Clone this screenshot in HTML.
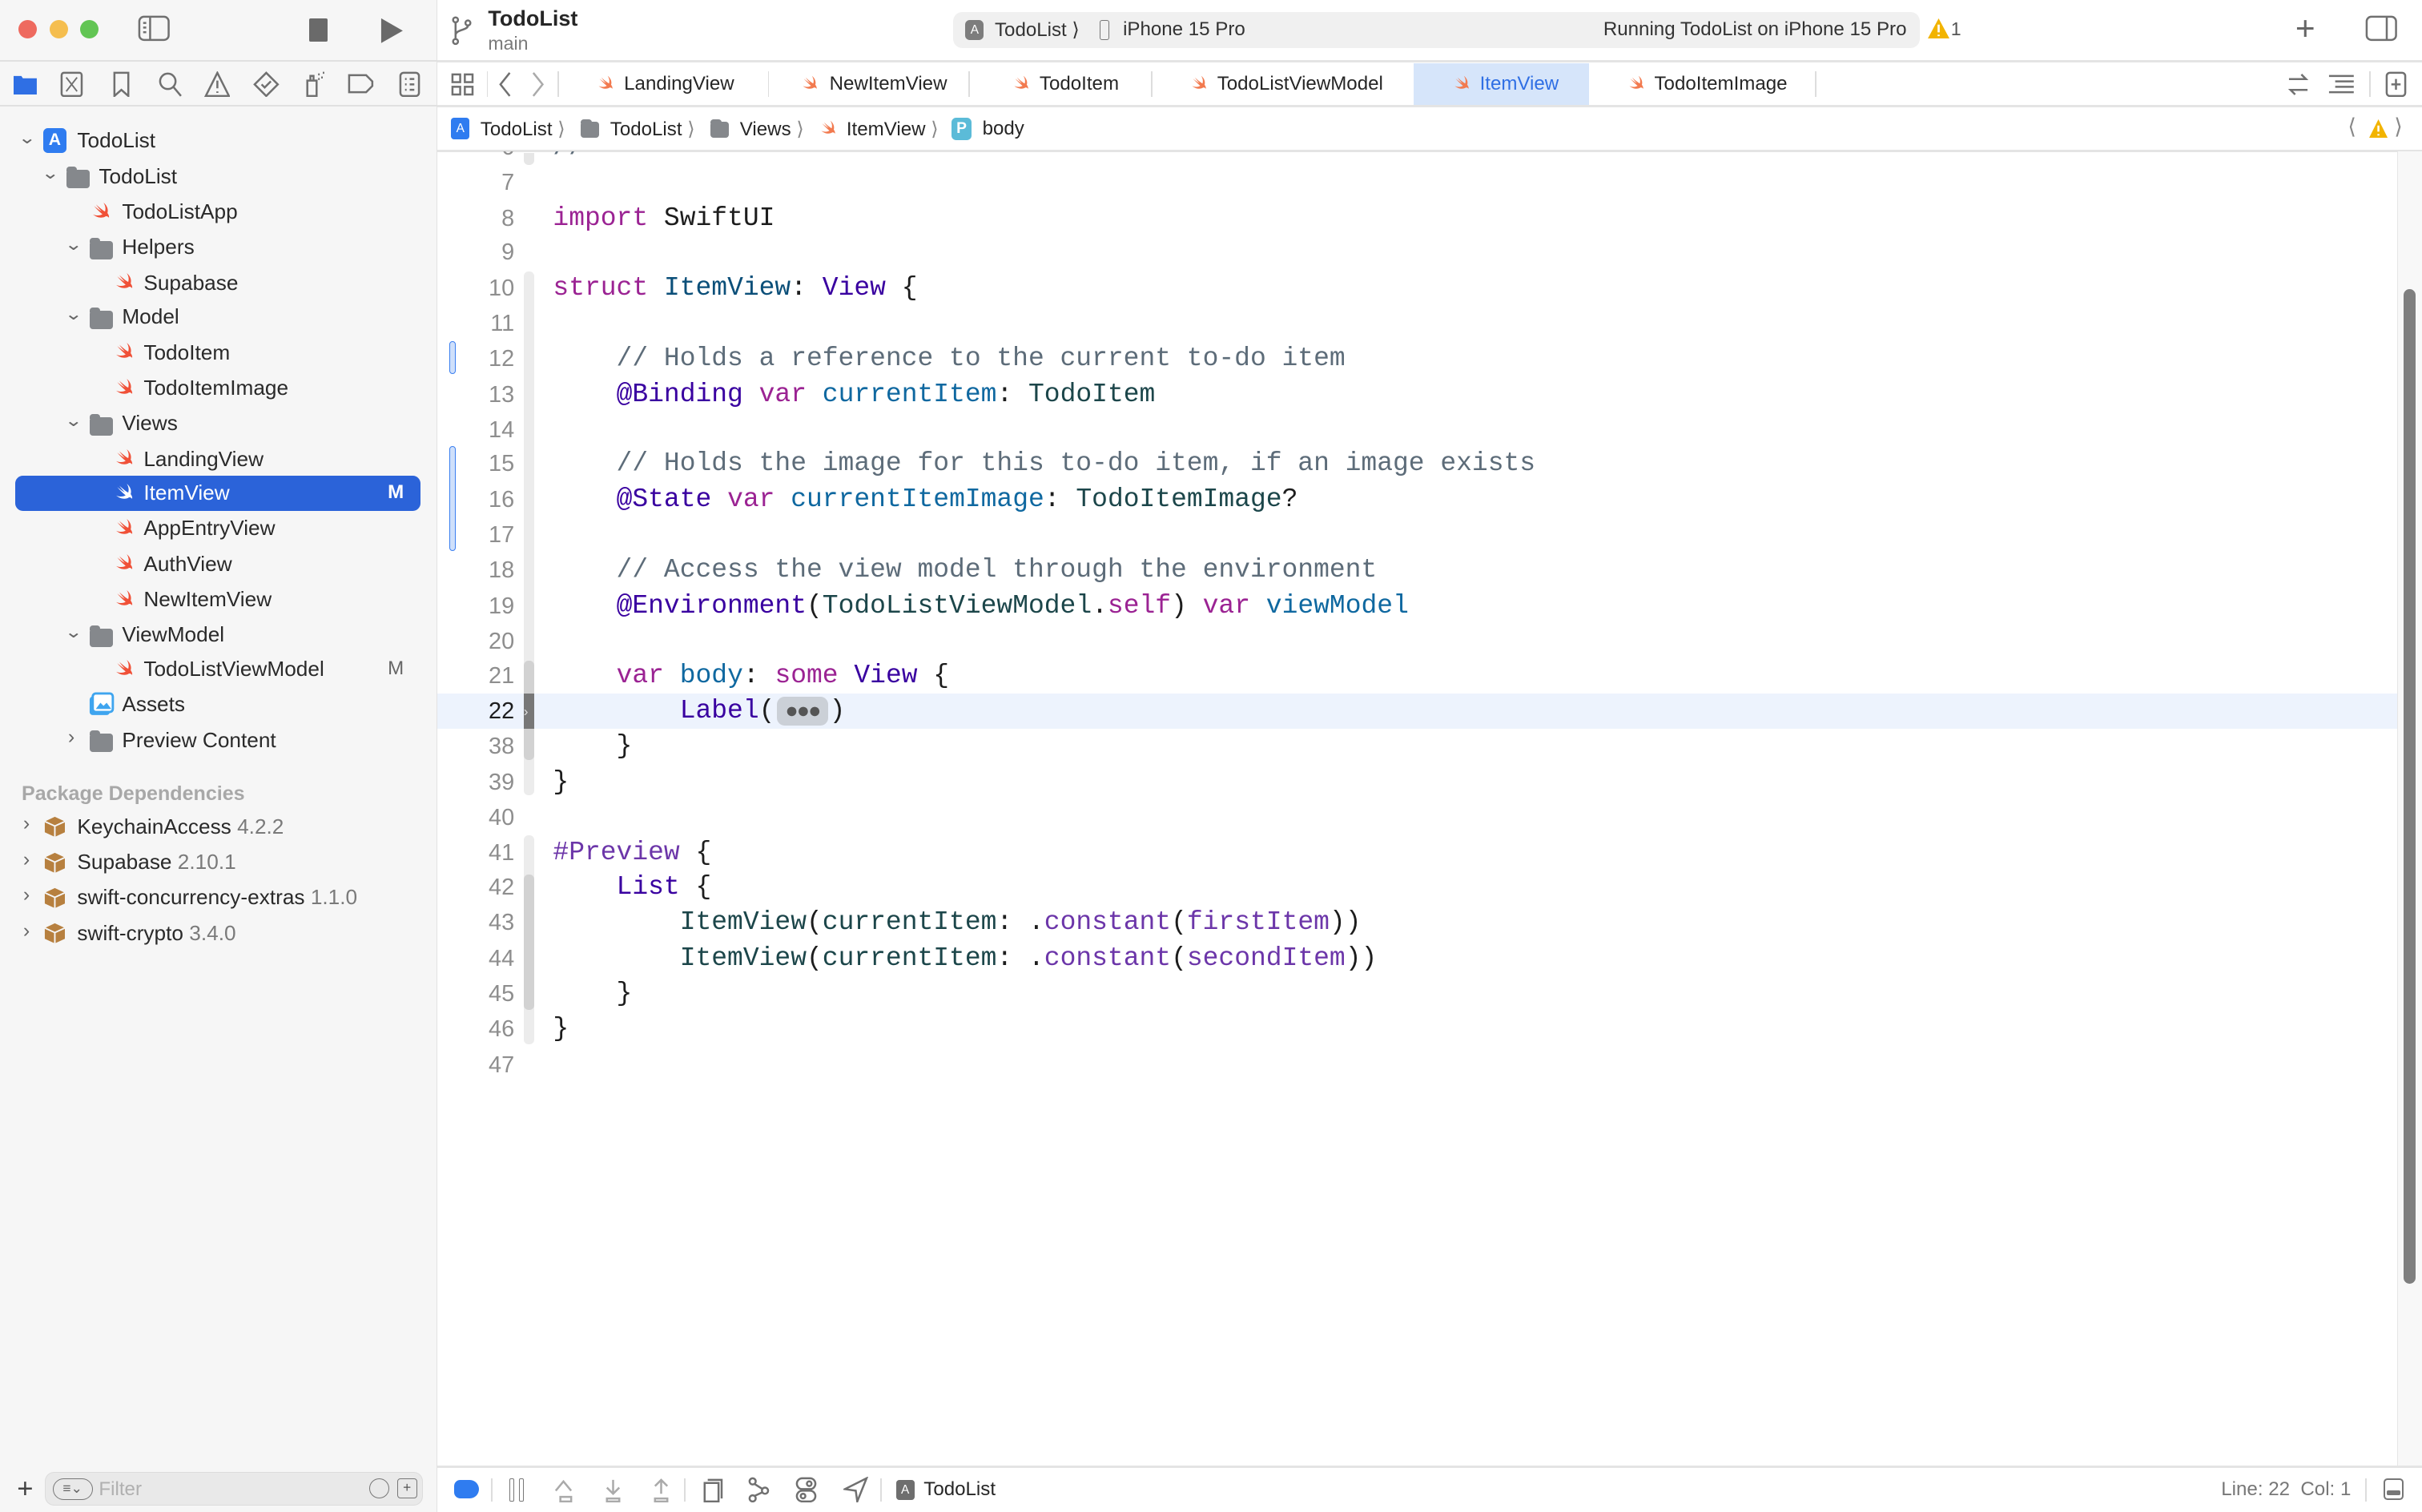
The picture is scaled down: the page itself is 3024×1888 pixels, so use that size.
<!DOCTYPE html>
<html><head><meta charset="utf-8">
<style>
*{margin:0;padding:0;box-sizing:border-box}
html,body{width:3024px;height:1888px;overflow:hidden;background:#fff}
#root{zoom:1.928572;position:relative;width:1568px;height:979px;overflow:hidden;font-family:"Liberation Sans",sans-serif;color:#262626}
.a{position:absolute}
.sb{left:0;top:0;width:283px;height:979px;background:#f6f6f6;border-right:1px solid #e2e2e2}
.hl{position:absolute;height:2px;background:#e4e4e4}
.row{position:absolute;font-size:13.6px;height:22px;line-height:22px;white-space:nowrap;color:#2a2a2a}
.sw{position:absolute;width:14px;height:14px}
.fold{position:absolute;width:15px;height:12px;background:#85888c;border-radius:2px}
.fold:before{content:"";position:absolute;left:0;top:-2px;width:7px;height:3px;background:#85888c;border-radius:2px 2px 0 0}
.chev{position:absolute;font-size:11px;color:#666;transform:scaleX(1.3)}
.code{position:absolute;left:358px;font-family:"Liberation Mono",monospace;font-size:17.1px;white-space:pre;color:#1d1d1d;height:23px;line-height:23px}
.ln{position:absolute;left:290px;width:43px;text-align:right;font-family:"Liberation Sans",sans-serif;font-size:15px;color:#8e8e8e;height:23px;line-height:23px}
.k{color:#9b2393}
.dt{color:#0b4f79}
.st{color:#3900a0}
.cm{color:#5d6c79}
.pd{color:#0f68a0}
.pt{color:#1c464a}
.sf{color:#6c36a9}
.tab{position:absolute;top:40px;height:29px;line-height:29px;font-size:12.5px;color:#262626;white-space:nowrap}
.bc{position:absolute;top:76px;font-size:12.5px;color:#262626;white-space:nowrap}
.ic{position:absolute;stroke:#707070;fill:none;stroke-width:1.3}
</style></head><body><div id="root">

<div class="a sb"></div>
<div class="a" style="left:12px;top:13px;width:12px;height:12px;border-radius:50%;background:#ee6a5f"></div>
<div class="a" style="left:32px;top:13px;width:12px;height:12px;border-radius:50%;background:#f5be4f"></div>
<div class="a" style="left:52px;top:13px;width:12px;height:12px;border-radius:50%;background:#62c554"></div>
<svg class="ic" style="left:89px;top:10px" width="22" height="18" viewBox="0 0 22 18"><rect x="1" y="1" width="19" height="15" rx="3"/><line x1="8" y1="1" x2="8" y2="16"/><line x1="3.5" y1="5" x2="5.5" y2="5"/><line x1="3.5" y1="8" x2="5.5" y2="8"/><line x1="3.5" y1="11" x2="5.5" y2="11"/></svg>
<div class="a" style="left:200px;top:12px;width:12px;height:15px;background:#6a6a6a;border-radius:1px"></div>
<svg class="a" style="left:246px;top:11px" width="16" height="18"><path d="M1 1 L15 9 L1 17Z" fill="#6a6a6a"/></svg>
<div class="hl" style="left:0;top:39px;width:283px;height:1px;background:#e0e0e0"></div>
<svg class="a" style="left:9px;top:47px" width="15" height="14"><path d="M0 2 h5 l1 1.5 h9 v10.5 h-15z" fill="#2f6fe4"/></svg>
<svg class="ic" style="left:39px;top:46px" width="16" height="17"><rect x="1" y="1" width="13" height="15" rx="1.5"/><path d="M4 4 L11 13 M11 4 L4 13" stroke-width="1"/></svg>
<svg class="ic" style="left:72px;top:46px" width="14" height="17"><path d="M2 1 h9 v15 l-4.5 -4 l-4.5 4z"/></svg>
<svg class="ic" style="left:102px;top:46px" width="16" height="17"><circle cx="6.5" cy="6.5" r="5"/><path d="M10 10 L15 16"/></svg>
<svg class="ic" style="left:132px;top:46px" width="17" height="17"><path d="M8.5 1 L16 16 H1z"/><path d="M8.5 6 v5 M8.5 13 v1"/></svg>
<svg class="ic" style="left:164px;top:46px" width="17" height="17"><path d="M8.5 1 L16 8.5 L8.5 16 L1 8.5z"/><path d="M5.5 8.5 l2 2 l4 -4"/></svg>
<svg class="ic" style="left:195px;top:46px" width="17" height="17"><path d="M4 6 h6 v10 h-6z M6 3 h2 v3 h-2z"/><path d="M11 2 h1 M13 4 h1 M11 5 h1 M14 1 h1"/></svg>
<svg class="ic" style="left:225px;top:47px" width="18" height="14"><path d="M1 1.5 h11 l4 4 v3 l-4 4 h-11z"/></svg>
<svg class="ic" style="left:258px;top:46px" width="14" height="17"><rect x="1" y="1" width="12" height="15" rx="2"/><path d="M4 5 h1 M7 5 h3 M4 8.5 h1 M7 8.5 h3 M4 12 h1 M7 12 h3"/></svg>
<div class="hl" style="left:0;top:68px;width:283px;height:1px;background:#e0e0e0"></div>

<div class="chev" style="left:13px;top:83px">&#8964;</div>
<div class="a" style="left:28px;top:83px;width:15px;height:16px;border-radius:3px;background:#2f7cf0;color:#fff;font-size:11px;text-align:center;line-height:16px;font-weight:bold">A</div>
<div class="row" style="left:50px;top:80px">TodoList</div>
<div class="chev" style="left:28px;top:106px">&#8964;</div>
<div class="fold" style="left:43px;top:110px"></div>
<div class="row" style="left:64px;top:103px">TodoList</div>
<div class="row" style="left:79px;top:126px">TodoListApp</div>
<div class="chev" style="left:43px;top:152px">&#8964;</div>
<div class="fold" style="left:58px;top:156px"></div>
<div class="row" style="left:79px;top:149px">Helpers</div>
<div class="row" style="left:93px;top:172px">Supabase</div>
<div class="chev" style="left:43px;top:197px">&#8964;</div>
<div class="fold" style="left:58px;top:201px"></div>
<div class="row" style="left:79px;top:194px">Model</div>
<div class="row" style="left:93px;top:217px">TodoItem</div>
<div class="row" style="left:93px;top:240px">TodoItemImage</div>
<div class="chev" style="left:43px;top:266px">&#8964;</div>
<div class="fold" style="left:58px;top:270px"></div>
<div class="row" style="left:79px;top:263px">Views</div>
<div class="row" style="left:93px;top:286px">LandingView</div>
<div class="a" style="left:10px;top:308px;width:262px;height:23px;border-radius:5px;background:#2b63d9"></div>
<div class="row" style="left:93px;top:308px;color:#fff">ItemView</div>
<div class="row" style="left:251px;top:308px;color:#fff;font-weight:bold;font-size:12.5px">M</div>
<div class="row" style="left:93px;top:331px">AppEntryView</div>
<div class="row" style="left:93px;top:354px">AuthView</div>
<div class="row" style="left:93px;top:377px">NewItemView</div>
<div class="chev" style="left:43px;top:403px">&#8964;</div>
<div class="fold" style="left:58px;top:407px"></div>
<div class="row" style="left:79px;top:400px">ViewModel</div>
<div class="row" style="left:93px;top:422px">TodoListViewModel</div>
<div class="row" style="left:251px;top:422px;color:#666;font-size:12.5px">M</div>
<svg class="a" style="left:57px;top:448px" width="17" height="16"><rect x="1" y="3" width="13" height="12" rx="2" fill="#3fa5ef"/><rect x="3" y="1" width="13" height="12" rx="2" fill="#fff" stroke="#3fa5ef" stroke-width="1.5"/><path d="M5 11 l3-4 l2 2 l2-2 l3 4z" fill="#3fa5ef"/></svg>
<div class="row" style="left:79px;top:445px">Assets</div>
<div class="chev" style="left:44px;top:470px;transform:none;font-size:13px">&#8250;</div>
<div class="fold" style="left:58px;top:475px"></div>
<div class="row" style="left:79px;top:468px">Preview Content</div>

<div class="row" style="left:14px;top:503px;color:#a8a8a8;font-weight:bold;font-size:13px">Package Dependencies</div>
<div class="chev" style="left:15px;top:526px;transform:none;font-size:13px">&#8250;</div>
<div class="row" style="left:50px;top:524px">KeychainAccess <span style="color:#7a7a7a">4.2.2</span></div>
<div class="chev" style="left:15px;top:549px;transform:none;font-size:13px">&#8250;</div>
<div class="row" style="left:50px;top:547px">Supabase <span style="color:#7a7a7a">2.10.1</span></div>
<div class="chev" style="left:15px;top:572px;transform:none;font-size:13px">&#8250;</div>
<div class="row" style="left:50px;top:570px">swift-concurrency-extras <span style="color:#7a7a7a">1.1.0</span></div>
<div class="chev" style="left:15px;top:595px;transform:none;font-size:13px">&#8250;</div>
<div class="row" style="left:50px;top:593px">swift-crypto <span style="color:#7a7a7a">3.4.0</span></div>
<svg class="a" style="left:28px;top:528px" width="15" height="15"><path d="M7.5 1 L14 4 V11 L7.5 14 L1 11 V4z" fill="#b7803f"/><path d="M1 4 L7.5 7 L14 4 M7.5 7 V14" stroke="#f6f6f6" stroke-width="1" fill="none"/></svg>
<svg class="a" style="left:28px;top:551px" width="15" height="15"><path d="M7.5 1 L14 4 V11 L7.5 14 L1 11 V4z" fill="#b7803f"/><path d="M1 4 L7.5 7 L14 4 M7.5 7 V14" stroke="#f6f6f6" stroke-width="1" fill="none"/></svg>
<svg class="a" style="left:28px;top:574px" width="15" height="15"><path d="M7.5 1 L14 4 V11 L7.5 14 L1 11 V4z" fill="#b7803f"/><path d="M1 4 L7.5 7 L14 4 M7.5 7 V14" stroke="#f6f6f6" stroke-width="1" fill="none"/></svg>
<svg class="a" style="left:28px;top:597px" width="15" height="15"><path d="M7.5 1 L14 4 V11 L7.5 14 L1 11 V4z" fill="#b7803f"/><path d="M1 4 L7.5 7 L14 4 M7.5 7 V14" stroke="#f6f6f6" stroke-width="1" fill="none"/></svg>

<div class="a" style="left:11px;top:955px;font-size:18px;color:#444;line-height:18px">+</div>
<div class="a" style="left:29px;top:953px;width:245px;height:22px;border-radius:6px;background:#e9e9e9;border:1px solid #dcdcdc"></div>
<div class="a" style="left:34px;top:957px;width:26px;height:14px;border-radius:7px;border:1px solid #777;font-size:9px;color:#666;text-align:center;line-height:12px">&#8801;&#8964;</div>
<div class="a" style="left:64px;top:957px;font-size:12.5px;color:#b0b0b0">Filter</div>
<div class="a" style="left:239px;top:957px;width:13px;height:13px;border-radius:50%;border:1px solid #777"></div>
<div class="a" style="left:257px;top:957px;width:13px;height:13px;border-radius:2px;border:1px solid #777;font-size:9px;text-align:center;line-height:11px;color:#555">+</div>

<svg class="ic" style="left:292px;top:10px" width="14" height="20"><circle cx="3" cy="17" r="1.6"/><circle cx="3" cy="3" r="1.6"/><circle cx="11" cy="5" r="1.6"/><path d="M3 4.6 V15.4 M11 6.6 C11 10 3 9 3 13"/></svg>
<div class="a" style="left:316px;top:4px;font-size:14px;font-weight:bold;color:#262626">TodoList</div>
<div class="a" style="left:316px;top:21px;font-size:12px;color:#7a7a7a">main</div>
<div class="a" style="left:617px;top:8px;width:626px;height:23px;border-radius:6px;background:#f0f0f0"></div>
<div class="a" style="left:625px;top:13px;width:12px;height:13px;border-radius:3px;background:#7d7d7d;color:#fff;font-size:8px;text-align:center;line-height:13px">A</div>
<div class="a" style="left:644px;top:12px;font-size:12.5px;color:#333">TodoList &#10217;</div>
<div class="a" style="left:712px;top:13px;width:6px;height:13px;border-radius:1.5px;border:1px solid #777"></div>
<div class="a" style="left:727px;top:12px;font-size:12.5px;color:#333">iPhone 15 Pro</div>
<div class="a" style="left:1038px;top:12px;font-size:12.5px;color:#333">Running TodoList on iPhone 15 Pro</div>
<svg class="a" style="left:1248px;top:12px" width="14" height="13"><path d="M7 0 L14 13 H0z" fill="#f2b400"/><path d="M7 4 v5 M7 10.5 v1" stroke="#fff" stroke-width="1.4"/></svg>
<div class="a" style="left:1263px;top:12px;font-size:12px;color:#555">1</div>
<div class="a" style="left:1486px;top:6px;font-size:22px;color:#666;font-weight:300">+</div>
<svg class="ic" style="left:1531px;top:10px" width="22" height="18"><rect x="1" y="1" width="19" height="15" rx="3"/><line x1="14" y1="1" x2="14" y2="16"/></svg>
<div class="hl" style="left:283px;top:39px;width:1285px;height:1.5px"></div>

<svg class="ic" style="left:292px;top:47px" width="15" height="15" stroke-width="1.1"><rect x="1" y="1" width="5" height="5"/><rect x="9" y="1" width="5" height="5"/><rect x="1" y="9" width="5" height="5"/><rect x="9" y="9" width="5" height="5"/></svg>
<div class="a" style="left:315px;top:46px;width:1px;height:17px;background:#ddd"></div>
<svg class="ic" style="left:322px;top:46px" width="10" height="17"><path d="M8 1 L2 8.5 L8 16"/></svg>
<svg class="ic" style="left:343px;top:46px;stroke:#aaa" width="10" height="17"><path d="M2 1 L8 8.5 L2 16"/></svg>
<div class="a" style="left:361px;top:46px;width:1px;height:17px;background:#ddd"></div>
<div class="a" style="left:915px;top:41px;width:114px;height:28px;background:#d6e5fa"></div>
<div class="tab" style="left:404px">LandingView</div>
<div class="a" style="left:497px;top:46px;width:1px;height:17px;background:#ddd"></div>
<div class="tab" style="left:537px">NewItemView</div>
<div class="a" style="left:627px;top:46px;width:1px;height:17px;background:#ddd"></div>
<div class="tab" style="left:673px">TodoItem</div>
<div class="a" style="left:745px;top:46px;width:1px;height:17px;background:#ddd"></div>
<div class="tab" style="left:788px">TodoListViewModel</div>
<div class="tab" style="left:958px;color:#2f6fe4">ItemView</div>
<div class="tab" style="left:1071px">TodoItemImage</div>
<div class="a" style="left:1175px;top:46px;width:1px;height:17px;background:#ddd"></div>
<svg class="ic" style="left:1481px;top:47px" width="14" height="15"><path d="M1 4 H12 L9 1 M13 11 H2 L5 14"/></svg>
<svg class="ic" style="left:1507px;top:47px" width="18" height="15"><path d="M1 2 H17 M5 5.5 H17 M5 9 H17 M1 12.5 H17"/></svg>
<div class="a" style="left:1534px;top:46px;width:1px;height:17px;background:#ddd"></div>
<svg class="ic" style="left:1544px;top:46px" width="14" height="17"><rect x="1" y="1" width="12" height="15" rx="2"/><path d="M7 5 v7 M4 8.5 h6"/></svg>
<div class="hl" style="left:283px;top:68px;width:1285px;height:1.5px"></div>

<div class="a" style="left:292px;top:76px;width:12px;height:14px;border-radius:2px;background:#2f7cf0;color:#fff;font-size:8px;text-align:center;line-height:14px">A</div>
<div class="bc" style="left:311px">TodoList <span style="color:#888">&#10217;</span></div>
<div class="fold" style="left:376px;top:79px;width:12px;height:10px"></div>
<div class="bc" style="left:395px">TodoList <span style="color:#888">&#10217;</span></div>
<div class="fold" style="left:460px;top:79px;width:12px;height:10px"></div>
<div class="bc" style="left:479px">Views <span style="color:#888">&#10217;</span></div>
<div class="bc" style="left:548px">ItemView <span style="color:#888">&#10217;</span></div>
<div class="a" style="left:616px;top:76px;width:13px;height:15px;border-radius:3px;background:#5bbbd8;color:#fff;font-size:10px;text-align:center;line-height:15px;font-weight:bold">P</div>
<div class="bc" style="left:636px">body</div>
<div class="a" style="left:1520px;top:74px;font-size:14px;color:#888">&#10216;</div>
<svg class="a" style="left:1534px;top:77px" width="12" height="12"><path d="M6 0 L12 12 H0z" fill="#f2b400"/><path d="M6 4 v4 M6 9.5 v1" stroke="#fff" stroke-width="1.3"/></svg>
<div class="a" style="left:1550px;top:74px;font-size:14px;color:#888">&#10217;</div>
<div class="hl" style="left:283px;top:97px;width:1285px;height:1.5px"></div>

<div class="a" style="left:283px;top:99px;width:1270px;height:850px;overflow:hidden">
  <div class="a" style="left:0;top:350px;width:1270px;height:23px;background:#edf3fd"></div>
</div>
<div class="a" style="left:339px;top:99px;width:7px;height:8px;background:#e6e6e6;border-radius:0 0 3px 3px"></div>
<div class="a" style="left:339px;top:176px;width:7px;height:339px;background:#ececec;border-radius:3px"></div>
<div class="a" style="left:339px;top:428px;width:7px;height:64px;background:#d2d2d2;border-radius:3px"></div>
<div class="a" style="left:339px;top:449px;width:7px;height:23px;background:#777"></div>
<div class="a" style="left:339px;top:541px;width:7px;height:135px;background:#ececec;border-radius:3px"></div>
<div class="a" style="left:339px;top:566px;width:7px;height:88px;background:#d2d2d2;border-radius:3px"></div>
<div class="a" style="left:291px;top:221px;width:4px;height:21px;border:1px solid #3b7ff0;border-radius:2px;background:#cfe0fb"></div>
<div class="a" style="left:291px;top:289px;width:4px;height:68px;border:1px solid #3b7ff0;border-radius:2px;background:#cfe0fb"></div>
<div class="a" style="left:1552px;top:98px;width:16px;height:851px;background:#f8f8f8;border-left:1px solid #e6e6e6"></div>
<div class="a" style="left:1556px;top:187px;width:8px;height:644px;background:#7f7f7f;border-radius:4px"></div>

<div class="a" style="left:283px;top:98px;width:1268px;height:851px;overflow:hidden">
<div style="position:absolute;left:-283px;top:-98px;width:1568px;height:979px">
<div class="ln" style="top:84px">6</div><div class="code cm" style="top:84px">//</div>
<div class="ln" style="top:107px">7</div>
<div class="ln" style="top:130px">8</div><div class="code" style="top:130px"><span class="k">import</span> SwiftUI</div>
<div class="ln" style="top:152px">9</div>
<div class="ln" style="top:175px">10</div><div class="code" style="top:175px"><span class="k">struct</span> <span class="dt">ItemView</span>: <span class="st">View</span> {</div>
<div class="ln" style="top:198px">11</div>
<div class="ln" style="top:221px">12</div><div class="code cm" style="top:221px">    // Holds a reference to the current to-do item</div>
<div class="ln" style="top:244px">13</div><div class="code" style="top:244px">    <span class="st">@Binding</span> <span class="k">var</span> <span class="pd">currentItem</span>: <span class="pt">TodoItem</span></div>
<div class="ln" style="top:267px">14</div>
<div class="ln" style="top:289px">15</div><div class="code cm" style="top:289px">    // Holds the image for this to-do item, if an image exists</div>
<div class="ln" style="top:312px">16</div><div class="code" style="top:312px">    <span class="st">@State</span> <span class="k">var</span> <span class="pd">currentItemImage</span>: <span class="pt">TodoItemImage</span>?</div>
<div class="ln" style="top:335px">17</div>
<div class="ln" style="top:358px">18</div><div class="code cm" style="top:358px">    // Access the view model through the environment</div>
<div class="ln" style="top:381px">19</div><div class="code" style="top:381px">    <span class="st">@Environment</span>(<span class="pt">TodoListViewModel</span>.<span class="k">self</span>) <span class="k">var</span> <span class="pd">viewModel</span></div>
<div class="ln" style="top:404px">20</div>
<div class="ln" style="top:426px">21</div><div class="code" style="top:426px">    <span class="k">var</span> <span class="pd">body</span>: <span class="k">some</span> <span class="st">View</span> {</div>
<div class="ln" style="top:449px;color:#1d1d1d">22</div><div class="code" style="top:449px">        <span class="st">Label</span>(</div>
<div class="a" style="left:503px;top:451px;width:33px;height:19px;border-radius:5px;background:#cbd0d7;color:#555;font-size:14px;text-align:center;line-height:18px;letter-spacing:-1px">&#9679;&#9679;&#9679;</div>
<div class="code" style="top:449px;left:537px">)</div>
<div class="a" style="left:339px;top:455px;font-size:9px;color:#ddd">&#8250;</div>
<div class="ln" style="top:472px">38</div><div class="code" style="top:472px">    }</div>
<div class="ln" style="top:495px">39</div><div class="code" style="top:495px">}</div>
<div class="ln" style="top:518px">40</div>
<div class="ln" style="top:541px">41</div><div class="code" style="top:541px"><span class="sf">#Preview</span> {</div>
<div class="ln" style="top:563px">42</div><div class="code" style="top:563px">    <span class="st">List</span> {</div>
<div class="ln" style="top:586px">43</div><div class="code" style="top:586px">        <span class="pt">ItemView</span>(<span class="pt">currentItem</span>: .<span class="sf">constant</span>(<span class="sf">firstItem</span>))</div>
<div class="ln" style="top:609px">44</div><div class="code" style="top:609px">        <span class="pt">ItemView</span>(<span class="pt">currentItem</span>: .<span class="sf">constant</span>(<span class="sf">secondItem</span>))</div>
<div class="ln" style="top:632px">45</div><div class="code" style="top:632px">    }</div>
<div class="ln" style="top:655px">46</div><div class="code" style="top:655px">}</div>
<div class="ln" style="top:678px">47</div>
</div></div>

<div class="hl" style="left:283px;top:949px;width:1285px;height:1.5px"></div>
<div class="a" style="left:294px;top:958px;width:16px;height:12px;border-radius:4px 6px 6px 4px;background:#2f7cf0"></div>
<div class="a" style="left:318px;top:957px;width:1px;height:15px;background:#ddd"></div>
<div class="a" style="left:330px;top:957px;width:3px;height:15px;border:1px solid #777;border-radius:1px"></div>
<div class="a" style="left:336px;top:957px;width:3px;height:15px;border:1px solid #777;border-radius:1px"></div>
<svg class="ic" style="left:358px;top:957px;stroke:#aaa" width="16" height="16"><path d="M2 8 L7 2 L12 8 M5 12 H12 V15 H5z"/></svg>
<svg class="ic" style="left:390px;top:957px;stroke:#aaa" width="14" height="16"><path d="M7 1 V10 M3 6 L7 10 L11 6 M3 13 H11 V15 H3z"/></svg>
<svg class="ic" style="left:421px;top:957px;stroke:#aaa" width="14" height="16"><path d="M7 10 V1 M3 5 L7 1 L11 5 M3 13 H11 V15 H3z"/></svg>
<div class="a" style="left:443px;top:957px;width:1px;height:15px;background:#ddd"></div>
<svg class="ic" style="left:453px;top:957px" width="16" height="16"><path d="M3 3 H12 V15 H3z M5 1 H14 V13"/></svg>
<svg class="ic" style="left:483px;top:956px" width="16" height="17"><circle cx="4" cy="3" r="2"/><circle cx="4" cy="14" r="2"/><circle cx="12" cy="9" r="2"/><path d="M5 4.5 L10.5 8 M5 12.5 L10.5 10"/></svg>
<svg class="ic" style="left:515px;top:956px" width="14" height="17"><rect x="1" y="1" width="12" height="7" rx="3.5"/><rect x="1" y="9" width="12" height="7" rx="3.5"/><circle cx="9" cy="4.5" r="1.5"/><circle cx="5" cy="12.5" r="1.5"/></svg>
<svg class="ic" style="left:546px;top:956px" width="16" height="17"><path d="M15 1 L1 8 L8 9 L9 16z"/></svg>
<div class="a" style="left:570px;top:957px;width:1px;height:15px;background:#ddd"></div>
<div class="a" style="left:580px;top:958px;width:12px;height:13px;border-radius:2px;background:#6e6e6e;color:#fff;font-size:8px;text-align:center;line-height:13px">A</div>
<div class="a" style="left:598px;top:957px;font-size:12.5px;color:#262626">TodoList</div>
<div class="a" style="left:1438px;top:957px;font-size:12.5px;color:#777">Line: 22&nbsp;&nbsp;Col: 1</div>
<div class="a" style="left:1531px;top:957px;width:1px;height:15px;background:#ddd"></div>
<div class="a" style="left:1543px;top:957px;width:13px;height:14px;border-radius:2.5px;border:1.2px solid #777"></div>
<div class="a" style="left:1545px;top:965px;width:9px;height:3px;background:#777;border-radius:1px"></div>

<svg width="0" height="0" style="position:absolute"><defs><path id="swp" d="M10.2 1.2c2.6 2 3.8 5.1 2.9 7.7 1 1.2 1.4 2.6 1.1 3.5-.5-.9-1.6-1.3-2.4-1.1-2.3 1.5-6 1.4-9.4-1.4 2.6 1.1 5.3 1 7-.1C7.6 8.2 5 5.8 3.2 3.6c1.7 1.4 4 3.1 5.6 4C7.3 6.1 5.8 4.2 4.7 2.6 7 4.7 9.6 6.8 11.3 7.8c.6-2 .5-4.1-1.1-6.6z"/></defs></svg>
<svg class="sw" style="left:58px;top:130px" viewBox="0 0 16 16"><use href="#swp" fill="#f05138"/></svg>
<svg class="sw" style="left:73px;top:176px" viewBox="0 0 16 16"><use href="#swp" fill="#f05138"/></svg>
<svg class="sw" style="left:73px;top:221px" viewBox="0 0 16 16"><use href="#swp" fill="#f05138"/></svg>
<svg class="sw" style="left:73px;top:244px" viewBox="0 0 16 16"><use href="#swp" fill="#f05138"/></svg>
<svg class="sw" style="left:73px;top:290px" viewBox="0 0 16 16"><use href="#swp" fill="#f05138"/></svg>
<svg class="sw" style="left:73px;top:312px" viewBox="0 0 16 16"><use href="#swp" fill="#fff"/></svg>
<svg class="sw" style="left:73px;top:335px" viewBox="0 0 16 16"><use href="#swp" fill="#f05138"/></svg>
<svg class="sw" style="left:73px;top:358px" viewBox="0 0 16 16"><use href="#swp" fill="#f05138"/></svg>
<svg class="sw" style="left:73px;top:381px" viewBox="0 0 16 16"><use href="#swp" fill="#f05138"/></svg>
<svg class="sw" style="left:73px;top:426px" viewBox="0 0 16 16"><use href="#swp" fill="#f05138"/></svg>
<svg class="sw" style="left:386px;top:48px;width:12px;height:12px" viewBox="0 0 16 16"><use href="#swp" fill="#f27a4f"/></svg>
<svg class="sw" style="left:518px;top:48px;width:12px;height:12px" viewBox="0 0 16 16"><use href="#swp" fill="#f27a4f"/></svg>
<svg class="sw" style="left:655px;top:48px;width:12px;height:12px" viewBox="0 0 16 16"><use href="#swp" fill="#f27a4f"/></svg>
<svg class="sw" style="left:770px;top:48px;width:12px;height:12px" viewBox="0 0 16 16"><use href="#swp" fill="#f27a4f"/></svg>
<svg class="sw" style="left:940px;top:48px;width:12px;height:12px" viewBox="0 0 16 16"><use href="#swp" fill="#f27a4f"/></svg>
<svg class="sw" style="left:1053px;top:48px;width:12px;height:12px" viewBox="0 0 16 16"><use href="#swp" fill="#f27a4f"/></svg>
<svg class="sw" style="left:530px;top:77px;width:12px;height:12px" viewBox="0 0 16 16"><use href="#swp" fill="#f27a4f"/></svg>

</div></body></html>
